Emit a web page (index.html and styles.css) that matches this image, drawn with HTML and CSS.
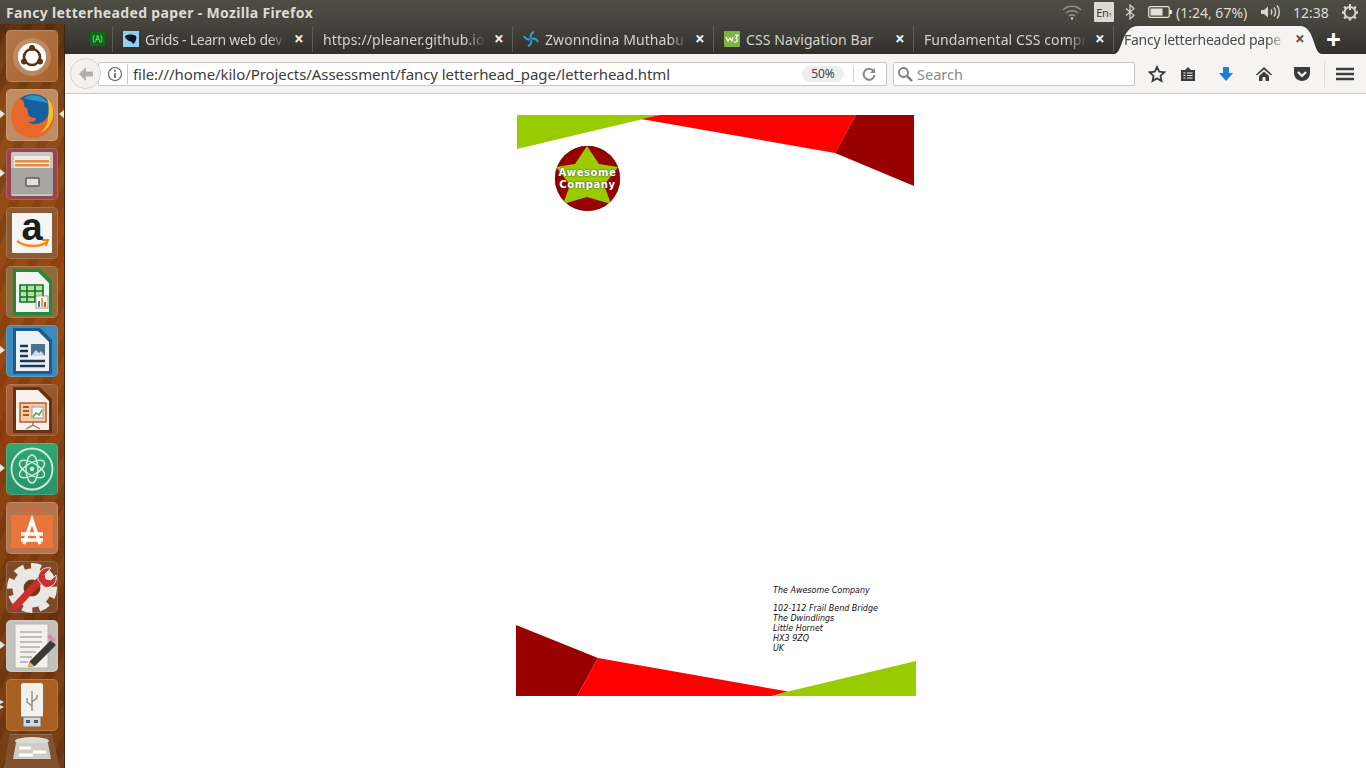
FILE: index.html
```html
<!DOCTYPE html>
<html lang="en">
<head>
  <meta charset="UTF-8" />
  <title>Fancy letterheaded paper - Mozilla Firefox</title>
  <link rel="stylesheet" href="styles.css">
</head>
<body>

  <!-- top panel -->
  <div class="panel">
    <div class="panel-title">Fancy letterheaded paper - Mozilla Firefox</div>
    <div class="panel-right">
      <svg class="ind-wifi" width="22" height="16" viewBox="0 0 22 16" fill="none" stroke="#8f8d84" stroke-width="1.6"><path d="M2 6c5-5 13-5 18 0M5 9c3.500-3 8.500-3 12 0M8 12c2-1.500 4-1.500 6 0"/><circle cx="11" cy="14.500" r="1.200" fill="#d8d6cc" stroke="none"/></svg>
      <div class="ind-lang">En<span class="ind-lang-sub">1</span></div>
      <svg class="ind-bt" width="10" height="16" viewBox="0 0 10 16" fill="none" stroke="#d8d6cc" stroke-width="1.200"><path d="M1 4.500l8 7-4 3.500V1l4 3.500-8 7"/></svg>
      <svg class="ind-batt" width="24" height="12" viewBox="0 0 24 12"><rect x=".7" y=".7" width="20.600" height="10.600" rx="1.500" fill="none" stroke="#e4e2d8" stroke-width="1.300"/><rect x="2.500" y="2.500" width="12" height="7" fill="#e4e2d8"/><rect x="22" y="4" width="2" height="4" fill="#e4e2d8"/></svg>
      <span class="ind-text ind-batt-text">(1:24, 67%)</span>
      <svg class="ind-vol" width="20" height="16" viewBox="0 0 20 16" fill="none" stroke="#d8d6cc" stroke-width="1.400"><path d="M1 6h3l4-3.500v11L4 10H1z" fill="#d8d6cc" stroke="none"/><path d="M11 5.500c1 1.500 1 3.500 0 5M14 3.500c2 2.500 2 6.500 0 9M17 1.500c3 3.500 3 9.500 0 13"/></svg>
      <span class="ind-text ind-clock">12:38</span>
      <svg class="ind-gear" width="18" height="18" viewBox="0 0 18 18" fill="none" stroke="#d8d6cc"><circle cx="9" cy="9.500" r="5.500" stroke-width="2"/><path d="M9 1v6" stroke-width="2"/><path d="M3.200 3.700l1.500 1.500M14.800 3.700l-1.500 1.500M1 9.500h2M15 9.500h2M3.200 15.300l1.500-1.500M14.800 15.300l-1.500-1.500M9 15.500v2" stroke-width="2.400"/></svg>
    </div>
  </div>

  <div class="desktop">

    <!-- launcher -->
    <div class="launcher">
      <div class="tile tile-ubuntu">
        <svg viewBox="0 0 52 52"><circle cx="26" cy="27" r="19" fill="#f6efe6" opacity=".22"/><circle cx="26" cy="27" r="14" fill="#fff"/><circle cx="26" cy="27" r="8" fill="none" stroke="#5e3312" stroke-width="2.600"/><circle cx="26" cy="18" r="3" fill="#5e3312"/><circle cx="18" cy="31.500" r="3" fill="#5e3312"/><circle cx="34" cy="31.500" r="3" fill="#5e3312"/></svg>
      </div>
      <div class="tile tile-firefox">
        <svg viewBox="0 0 52 52"><circle cx="27" cy="26" r="21" fill="#17609f"/><path d="M18 9c8-5 19-3 25 6-7-3-16-3-25-6z" fill="#2f95cf"/><path d="M13 9c-5 5-8 11-8 18 0 13 10 23 23 22 11-1 20-10 20-22 0-5-1-9-4-13 1 6-1 13-5 17-5 5-13 5-17 2 5 0 8-1 8-4-5 0-8-2-8-6 0-3-2-5-4-6 1-3 0-6-5-8z" fill="#e8672a"/><path d="M41 9c5 5 7 11 6 18-1 8-6 14-13 17 5-4 8-9 8-15 1-7 1-14-1-20z" fill="#f7c12e"/></svg>
      </div>
      <div class="tile tile-files">
        <svg viewBox="0 0 52 52"><rect x="5" y="4" width="42" height="44" rx="2" fill="#c9c7c3"/><rect x="8" y="8" width="36" height="13" fill="#efe9df"/><rect x="9" y="12" width="34" height="2.500" fill="#e48a4a"/><rect x="9" y="16" width="34" height="2.500" fill="#e48a4a"/><rect x="5" y="20" width="42" height="26" fill="#a7a5a1"/><rect x="20" y="30" width="13" height="8" rx="1" fill="#e4e2de" stroke="#5f5d5a" stroke-width="1.500"/></svg>
      </div>
      <div class="tile tile-amazon">
        <svg viewBox="0 0 52 52"><rect x="6" y="6" width="40" height="40" rx="1" fill="#f4f4f2"/><path d="M11 34c8 6 22 7 30 1" fill="none" stroke="#f08a1d" stroke-width="2.400"/><path d="M36 33l6 0-2 6" fill="none" stroke="#f08a1d" stroke-width="2"/></svg>
        <span class="amazon-a">a</span>
      </div>
      <div class="tile tile-calc">
        <svg viewBox="0 0 52 52"><path d="M7 3h27l12 12v34H7z" fill="#1f8a3a"/><path d="M10 6h22l11 11v29H10z" fill="#f3f4f0"/><path d="M14 19h23v17H14zM14 25h23M14 31h23M21 19v17M29 19v17" fill="#b7e0a0" stroke="#12702c" stroke-width="1.600"/><rect x="30" y="30" width="12" height="12" fill="#fff" stroke="#999"/><rect x="32" y="35" width="2" height="6" fill="#3a78b8"/><rect x="35" y="32" width="2" height="9" fill="#e8a22a"/><rect x="38" y="36" width="2" height="5" fill="#d24b2a"/></svg>
      </div>
      <div class="tile tile-writer">
        <svg viewBox="0 0 52 52"><path d="M7 3h27l12 12v34H7z" fill="#1e5a8e"/><path d="M10 6h22l11 11v29H10z" fill="#eef1f4"/><path d="M14 21h8M14 26h8M14 31h8M14 36h25M14 41h25" stroke="#17395c" stroke-width="2.400"/><rect x="25" y="19" width="14" height="12" fill="#4c6f92"/><path d="M25 31l5-6 3 3 2-2 4 5z" fill="#cfdbe6"/></svg>
      </div>
      <div class="tile tile-impress">
        <svg viewBox="0 0 52 52"><path d="M7 3h27l12 12v34H7z" fill="#6b2f12"/><path d="M10 6h22l11 11v29H10z" fill="#f6f1ec"/><rect x="14" y="19" width="26" height="19" fill="#f3cdaa" stroke="#b5531c" stroke-width="1.400"/><path d="M17 23h6M17 27h6M17 31h6" stroke="#b5531c" stroke-width="2"/><rect x="26" y="23" width="11" height="11" fill="#fff" stroke="#999"/><path d="M27 33l3-4 3 2 3-5" fill="none" stroke="#4f9a3a" stroke-width="1.400"/><path d="M27 38v3l-7 4M27 41l7 4" fill="none" stroke="#8a7a6a" stroke-width="1.300"/></svg>
      </div>
      <div class="tile tile-atom">
        <svg viewBox="0 0 52 52" fill="none" stroke="#c9efd9"><circle cx="26" cy="26" r="20.500" stroke-width="1.800"/><ellipse cx="26" cy="26" rx="14" ry="6" stroke-width="1.500" transform="rotate(30 26 26)"/><ellipse cx="26" cy="26" rx="14" ry="6" stroke-width="1.500" transform="rotate(-30 26 26)"/><ellipse cx="26" cy="26" rx="14" ry="6" stroke-width="1.500" transform="rotate(90 26 26)"/><circle cx="26" cy="26" r="2.200" fill="#c9efd9" stroke="none"/></svg>
      </div>
      <div class="tile tile-software">
        <svg viewBox="0 0 52 52"><path d="M18 14v-5a3 3 0 0 1 3-3h10a3 3 0 0 1 3 3v5" fill="none" stroke="#d9663a" stroke-width="2.400"/><path d="M5 13h42v33H5z" fill="#ea7439"/><path d="M18 42l8-24 8 24M15 32h22M15 38h22" fill="none" stroke="#fff" stroke-width="3.400"/></svg>
      </div>
      <div class="tile tile-settings">
        <svg viewBox="0 0 52 52"><circle cx="26" cy="27" r="14" fill="none" stroke="#e9e7e4" stroke-width="11"/><circle cx="26" cy="27" r="22" fill="none" stroke="#e9e7e4" stroke-width="6" stroke-dasharray="10 7"/><circle cx="26" cy="27" r="8" fill="#6b3a1c"/><path d="M9 46L36 17" stroke="#c9302c" stroke-width="7" stroke-linecap="round"/><path d="M32 19c-1-7 5-14 13-12l-6 6 1 5 5 1 5-5c2 8-5 14-12 12z" fill="#c9302c" stroke="#e6e4e0"/></svg>
      </div>
      <div class="tile tile-editor">
        <svg viewBox="0 0 52 52"><rect x="9" y="4" width="33" height="44" fill="#f3f2ee" stroke="#b7b5b0"/><path d="M14 12h22M14 17h22M14 22h22M14 27h20M14 32h16M14 37h12M14 42h8" stroke="#8d8b86" stroke-width="1.200"/><path d="M24 41l21-21 5 5-21 21-7 1z" fill="#3a3937"/><path d="M41 17l3-3 6 6-3 3z" fill="#d78ab8"/><path d="M22 47l2-5 4 4z" fill="#e7c14a"/></svg>
      </div>
      <div class="tile tile-usb">
        <svg viewBox="0 0 52 52"><rect x="15" y="4" width="22" height="34" rx="2" fill="#f2f1ee"/><rect x="17" y="38" width="18" height="10" fill="#d8d7d3" stroke="#6d6b68"/><rect x="20" y="41" width="4" height="3" fill="#3c5d85"/><rect x="28" y="41" width="4" height="3" fill="#3c5d85"/><path d="M26 12v20M26 27l-5-4v-4M26 23l5-4v-3" fill="none" stroke="#8c8a85" stroke-width="1.400"/></svg>
      </div>
      <div class="tile tile-trash">
        <svg viewBox="0 0 56 35"><ellipse cx="28" cy="7" rx="17" ry="4" fill="#dcdad5"/><path d="M12 9h32l3 16H9z" fill="#cfcdc8"/><path d="M15 14h12M29 18h13M15 21h14" stroke="#fff" stroke-width="3"/></svg>
      </div>
      <span class="pip pip-firefox-l"></span>
      <span class="pip pip-firefox-r"></span>
      <span class="pip pip-files"></span>
      <span class="pip pip-writer"></span>
      <span class="pip pip-atom"></span>
      <span class="pip pip-editor"></span>
      <span class="pip pip-usb-a"></span>
      <span class="pip pip-usb-b"></span>
    </div>

    <div class="browser">

      <!-- tab strip -->
      <div class="tabs">
        <div class="tab tab-pinned">
          <span class="fav fav-pinned">(A)</span>
        </div>
        <div class="tab">
          <svg class="fav" viewBox="0 0 16 16"><rect width="16" height="16" fill="#8fd0ee"/><path d="M2 5c3-2 8-2 11 0 1 2 0 6-3 8-1-2-2-3-4-3-2-1-4-3-4-5z" fill="#10141c"/></svg>
          <span class="tab-name tab-name-tight">Grids - Learn web dev</span>
          <span class="tab-x">×</span>
        </div>
        <div class="tab">
          <span class="tab-name">https://pleaner.github.io</span>
          <span class="tab-x">×</span>
        </div>
        <div class="tab tab-wide">
          <svg class="fav" viewBox="0 0 16 16" fill="none" stroke="#2ea3d0" stroke-width="2"><path d="M8 8C7 5 8 2 11 1M8 8c3-1 6 0 7 3M8 8c1 3 0 6-3 7M8 8C5 9 2 8 1 5"/><circle cx="8" cy="8" r="1.500" fill="#1877a8" stroke="none"/></svg>
          <span class="tab-name">Zwonndina Muthabu</span>
          <span class="tab-x">×</span>
        </div>
        <div class="tab">
          <svg class="fav" viewBox="0 0 16 16"><rect width="16" height="16" rx="1" fill="#7cb342"/><path d="M2 6l2 4 2-3 2 3 1-4M11 4h3l-2 3c2 0 2 5-2 4" fill="none" stroke="#fff" stroke-width="1.200"/></svg>
          <span class="tab-name tab-name-full">CSS Navigation Bar</span>
          <span class="tab-x">×</span>
        </div>
        <div class="tab">
          <span class="tab-name">Fundamental CSS compr</span>
          <span class="tab-x">×</span>
        </div>
        <div class="tab tab-active">
          <svg class="tab-shape" width="208" height="30" viewBox="0 0 208 30"><path d="M0 30C9 30 7 2 24 2H186C201 2 199 30 208 30Z" fill="#f5f4f3"/></svg>
          <span class="tab-name tab-name-tight">Fancy letterheaded pape</span>
          <span class="tab-x">×</span>
        </div>
        <div class="tab-new">+</div>
      </div>

      <!-- nav bar -->
      <div class="navbar">
        <div class="back-btn">
          <svg width="16" height="16" viewBox="0 0 16 16"><path d="M8 1L1 8l7 7v-4.500h7v-5H8z" fill="#b0afad"/></svg>
        </div>
        <div class="urlbar">
          <svg class="url-info" width="16" height="16" viewBox="0 0 16 16" fill="none" stroke="#5a5a5a"><circle cx="8" cy="8" r="6.500" stroke-width="1.100"/><path d="M8 7v5" stroke-width="1.600"/><circle cx="8" cy="4.700" r="1" fill="#5a5a5a" stroke="none"/></svg>
          <span class="url-text">file:///home/kilo/Projects/Assessment/fancy letterhead_page/letterhead.html</span>
          <span class="url-zoom">50%</span>
          <svg class="url-reload" width="16" height="16" viewBox="0 0 16 16" fill="none" stroke="#8a8a88" stroke-width="2"><path d="M12.500 5A5.500 5.500 0 1 0 13.500 9"/><path d="M14 2v5H9" fill="#8a8a88" stroke="none"/></svg>
        </div>
        <div class="searchbar">
          <svg width="16" height="16" viewBox="0 0 16 16" fill="none" stroke="#7a7a78" stroke-width="1.800"><circle cx="6.500" cy="6.500" r="4.500"/><path d="M10 10l5 5" stroke-width="2.400"/></svg>
          <span class="search-text">Search</span>
        </div>
        <div class="nav-icons">
          <svg class="nav-star" width="18" height="18" viewBox="0 0 18 18"><path d="M9 2l2.200 4.700 5.100.600-3.800 3.500 1 5.100L9 13.400 4.500 15.900l1-5.100L1.700 7.300l5.100-.6z" fill="none" stroke="#3c3c3c" stroke-width="1.800"/></svg>
          <svg class="nav-clip" width="16" height="16" viewBox="0 0 16 16"><path d="M1 4h4l3-3 3 3h4v11H1z" fill="#3c3c3c"/><path d="M3.500 7h2M3.500 9.500h2M3.500 12h2M7 7h5.500M7 9.500h5.500M7 12h5.500" stroke="#f5f4f3" stroke-width="1.200"/></svg>
          <svg class="nav-down" width="16" height="16" viewBox="0 0 16 16"><path d="M5 1h6v6h4l-7 8-7-8h4z" fill="#1a7fe0"/></svg>
          <svg class="nav-home" width="18" height="16" viewBox="0 0 18 16"><path d="M9 1L1 8.500l1 1L9 3.500l7 6 1-1z" fill="#3c3c3c"/><path d="M4 10l5-4.500 5 4.500v5h-3.500v-4h-3v4H4z" fill="#3c3c3c"/></svg>
          <svg class="nav-pocket" width="18" height="16" viewBox="0 0 18 16"><path d="M1 1h16v6c0 5-4 8-8 8s-8-3-8-8z" fill="#3c3c3c"/><path d="M5 6l4 4 4-4" fill="none" stroke="#f5f4f3" stroke-width="2.200"/></svg>
          <span class="nav-sep"></span>
          <svg class="nav-menu" width="18" height="14" viewBox="0 0 18 14"><path d="M0 2h18M0 7h18M0 12h18" stroke="#3c3c3c" stroke-width="2.600"/></svg>
        </div>
      </div>

      <!-- page content -->
      <div class="page">
        <div class="sheet">
          <svg class="sheet-top" width="397" height="71" viewBox="0 0 397 71">
            <polygon points="0,0 143,0 0,34" fill="#99cc00"/>
            <polygon points="143,0 339,0 318,38 124,4" fill="#ff0000"/>
            <polygon points="339,0 397,0 397,71 318,38" fill="#990000"/>
          </svg>
          <div class="logo">
            <svg class="logo-star" width="65" height="65" viewBox="0 0 65 65"><polygon points="32,0 44,18 63,21 49,39 56,58 32,51 8,58 15,39 1,21 20,18" fill="#99cc00"/></svg>
            <span class="logo-text">Awesome<br>Company</span>
          </div>
          <div class="address">
            <p class="address-name">The Awesome Company</p>
            <p>102-112 Frail Bend Bridge<br>The Dwindlings<br>Little Hornet<br>HX3 9ZQ<br>UK</p>
          </div>
          <svg class="sheet-bottom" width="400" height="71" viewBox="0 0 400 71">
            <polygon points="0,0 82,33 61,71 0,71" fill="#990000"/>
            <polygon points="82,33 272,66.500 256,71 61,71" fill="#ff0000"/>
            <polygon points="256,71 272,66.500 400,36 400,71" fill="#99cc00"/>
          </svg>
        </div>
      </div>

    </div>
  </div>

</body>
</html>
```

FILE: styles.css
```css
html, body { margin: 0; height: 100%; overflow: hidden; }
body { font-family: "Noto Sans", sans-serif; background: #fff; display: flex; flex-direction: column; }

/* top panel */
.panel { height: 24px; flex: none; display: flex; align-items: center; justify-content: space-between; background: linear-gradient(#4e4d44, #46453d); color: #dfdbd2; }
.panel-title { margin-left: 6px; font-size: 14px; font-weight: 700; letter-spacing: 0.34px; white-space: nowrap; }
.panel-right { display: flex; align-items: center; height: 24px; }
.ind-wifi { margin-right: 11px; }
.ind-lang { width: 20px; height: 20px; margin-right: 11px; background: #dcdad2; color: #3c3b37; border-radius: 1px; font-size: 11px; letter-spacing: -0.3px; line-height: 21px; text-align: center; }
.ind-lang-sub { font-size: 6px; }
.ind-bt { margin-right: 13px; }
.ind-batt { margin-right: 4px; }
.ind-text { font-size: 14px; color: #dfdbd2; white-space: nowrap; }
.ind-batt-text { width: 71px; margin-right: 13px; }
.ind-vol { margin-right: 13px; }
.ind-clock { width: 36px; margin-right: 12px; }
.ind-gear { margin-right: 7px; }

.desktop { flex: 1; display: flex; min-height: 0; }

/* launcher */
.launcher { position: relative; width: 64px; flex: none; border-right: 1px solid #3f2410; display: flex; flex-direction: column; align-items: center; gap: 7px; padding-top: 6px; overflow: hidden;
  background:
    radial-gradient(ellipse 40px 70px at 60px 240px, rgba(170,60,10,0.45), transparent),
    radial-gradient(ellipse 40px 80px at 0 420px, rgba(150,50,10,0.5), transparent),
    radial-gradient(ellipse 50px 60px at 50px 600px, rgba(60,20,0,0.3), transparent),
    repeating-linear-gradient(115deg, rgba(60,20,0,0.1) 0 9px, rgba(230,130,50,0.06) 9px 21px),
    linear-gradient(#57300f 0, #8a4a16 12%, #93460f 45%, #7d3d10 75%, #6e3a14 100%); }
.tile { width: 52px; height: 52px; flex: none; position: relative; border-radius: 5px; box-shadow: inset 0 0 0 1px rgba(255,255,255,0.16); }
.tile svg { display: block; width: 52px; height: 52px; }
.tile-ubuntu { background: linear-gradient(135deg, #b3764a, #a8632c); }
.tile-firefox { background: #c08d63; }
.tile-files { background: #97464b; }
.tile-amazon { background: #8c5a33; }
.tile-calc { background: #8d6b3d; }
.tile-writer { background: #3f88ba; }
.tile-impress { background: linear-gradient(135deg, #a8663c, #8b4f26); }
.tile-atom { background: linear-gradient(#33a573, #2a9268); }
.tile-software { background: #b5734e; }
.tile-settings { background: #7e4a28; }
.tile-editor { background: #c4c2be; }
.tile-usb { background: #a86022; }
.tile-trash { width: 56px; height: 35px; margin-top: -4px; border-radius: 0; background: #80522e; clip-path: polygon(10% 0, 86% 0, 100% 100%, 0 100%); }
.tile-trash svg { width: 56px; height: 35px; }
.amazon-a { position: absolute; left: 0; right: 0; top: 1px; text-align: center; font-family: "Liberation Sans", sans-serif; font-size: 38px; font-weight: 700; line-height: 38px; color: #1c1c1c; }

.pip { position: absolute; left: 0; width: 0; height: 0; border-top: 4px solid transparent; border-bottom: 4px solid transparent; border-left: 5px solid #e8e4de; }
.pip-firefox-l { top: 86px; }
.pip-firefox-r { top: 86px; left: auto; right: 0; border-left: 0; border-right: 5px solid #e8e4de; }
.pip-files { top: 145px; }
.pip-writer { top: 322px; }
.pip-atom { top: 440px; }
.pip-editor { top: 617px; }
.pip-usb-a { top: 676px; border-top-width: 2px; border-bottom-width: 2px; border-left-width: 4px; }
.pip-usb-b { top: 681px; border-top-width: 2px; border-bottom-width: 2px; border-left-width: 4px; }

/* browser */
.browser { flex: 1; min-width: 0; display: flex; flex-direction: column; }
.tabs { height: 30px; flex: none; display: flex; align-items: center; color: #d4d2cb; font-size: 14px; letter-spacing: 0.1px; background: linear-gradient(#45443c, #302f2b); }
.tab { position: relative; width: 200px; height: 26px; box-sizing: border-box; padding: 0 8px 0 10px; display: flex; align-items: center; gap: 6px; border-right: 1px solid #5c5b54; white-space: nowrap; }
.tab-pinned { width: 48px; padding: 0 0 0 25px; }
.tab-wide { width: 201px; }
.fav { width: 16px; height: 16px; flex: none; }
.fav-pinned { width: 15px; height: 14px; background: #0c6a14; color: #8fe89a; font-size: 8px; letter-spacing: 0; line-height: 14px; text-align: center; }
.tab-name { flex: 1; min-width: 0; overflow: hidden; -webkit-mask-image: linear-gradient(90deg, #000 88%, transparent 100%); mask-image: linear-gradient(90deg, #000 88%, transparent 100%); }
.tab-name-full { -webkit-mask-image: none; mask-image: none; }
.tab-name-tight { letter-spacing: -0.25px; }
.tab-x { width: 10px; flex: none; font-size: 17px; font-weight: 700; line-height: 20px; text-align: center; color: #eeece6; margin-left: 2px; }
.tab-active { width: 199px; height: 30px; border-right: 0; color: #4c4c4c; align-self: flex-end; }
.tab-active .tab-name, .tab-active .tab-x { position: relative; }
.tab-active .tab-x { color: #555; }
.tab-shape { position: absolute; left: 0; bottom: 0; }
.tab-new { margin-left: 13px; color: #fff; font-size: 26px; font-weight: 700; line-height: 30px; }

.navbar { height: 40px; flex: none; box-sizing: border-box; border-bottom: 1px solid #c9c8c6; background: #f5f4f3; display: flex; align-items: center; padding-left: 33px; position: relative; }
.back-btn { position: absolute; left: 5px; top: 4px; width: 31px; height: 31px; box-sizing: border-box; border: 1px solid #d3d2d0; border-radius: 50%; background: #f3f2f1; display: flex; align-items: center; justify-content: center; z-index: 1; }
.urlbar { width: 789px; height: 24px; box-sizing: border-box; border: 1px solid #c8c7c5; border-radius: 2px; background: #fff; display: flex; align-items: center; margin-right: 6px; }
.url-info { margin-left: 8px; margin-right: 4px; flex: none; }
.url-text { flex: 1; min-width: 0; padding-left: 5px; border-left: 1px solid #c8c7c5; font-size: 15px; line-height: 20px; color: #3d3d3d; white-space: nowrap; letter-spacing: -0.07px; }
.url-zoom { width: 42px; height: 16px; flex: none; margin-right: 9px; border-radius: 8px; background: #eeeeee; color: #444; font-size: 12px; line-height: 16px; text-align: center; }
.url-reload { flex: none; margin-right: 9px; padding-left: 7px; border-left: 1px solid #d5d4d2; }
.searchbar { width: 242px; height: 24px; box-sizing: border-box; border: 1px solid #c8c7c5; border-radius: 2px; background: #fff; display: flex; align-items: center; padding-left: 3px; gap: 4px; }
.search-text { font-size: 14.500px; color: #8a8a8a; }
.nav-icons { flex: 1; display: flex; align-items: center; height: 100%; }
.nav-star { margin-left: 13px; }
.nav-clip { margin-left: 14px; }
.nav-down { margin-left: 22px; }
.nav-home { margin-left: 21px; }
.nav-pocket { margin-left: 20px; }
.nav-sep { width: 1px; height: 26px; margin-left: 13px; background: #dedddb; }
.nav-menu { margin-left: 11px; }

/* letterhead */
.page { flex: 1; min-height: 0; background: #fff; padding: 21px 0 0 451px; }
.sheet { position: relative; width: 400px; height: 581px; display: flex; flex-direction: column; }
.sheet-top { display: block; margin-left: 1px; flex: none; }
.sheet-bottom { position: absolute; left: 0; bottom: 0; display: block; }
.logo { position: absolute; left: 39px; top: 31px; width: 65px; height: 65px; border-radius: 50%; overflow: hidden; background: #990000; box-shadow: inset 0 0 2px rgba(40,0,0,0.8), 0 0 1px #777; }
.logo-star { position: absolute; left: 0; top: 0; }
.logo-text { position: absolute; left: 0; right: 0; top: 21px; text-align: center; font-family: "DejaVu Sans", sans-serif; font-size: 10px; font-weight: 700; line-height: 12px; letter-spacing: 0.6px; color: #fff; text-shadow: 0 0 2px #333; }
.address { position: relative; margin: auto 0 42px 257px; font-family: "DejaVu Sans", sans-serif; font-style: italic; font-size: 8px; line-height: 10px; color: #111; }
.address p { margin: 0; }
.address-name { margin-bottom: 8px !important; }
```
